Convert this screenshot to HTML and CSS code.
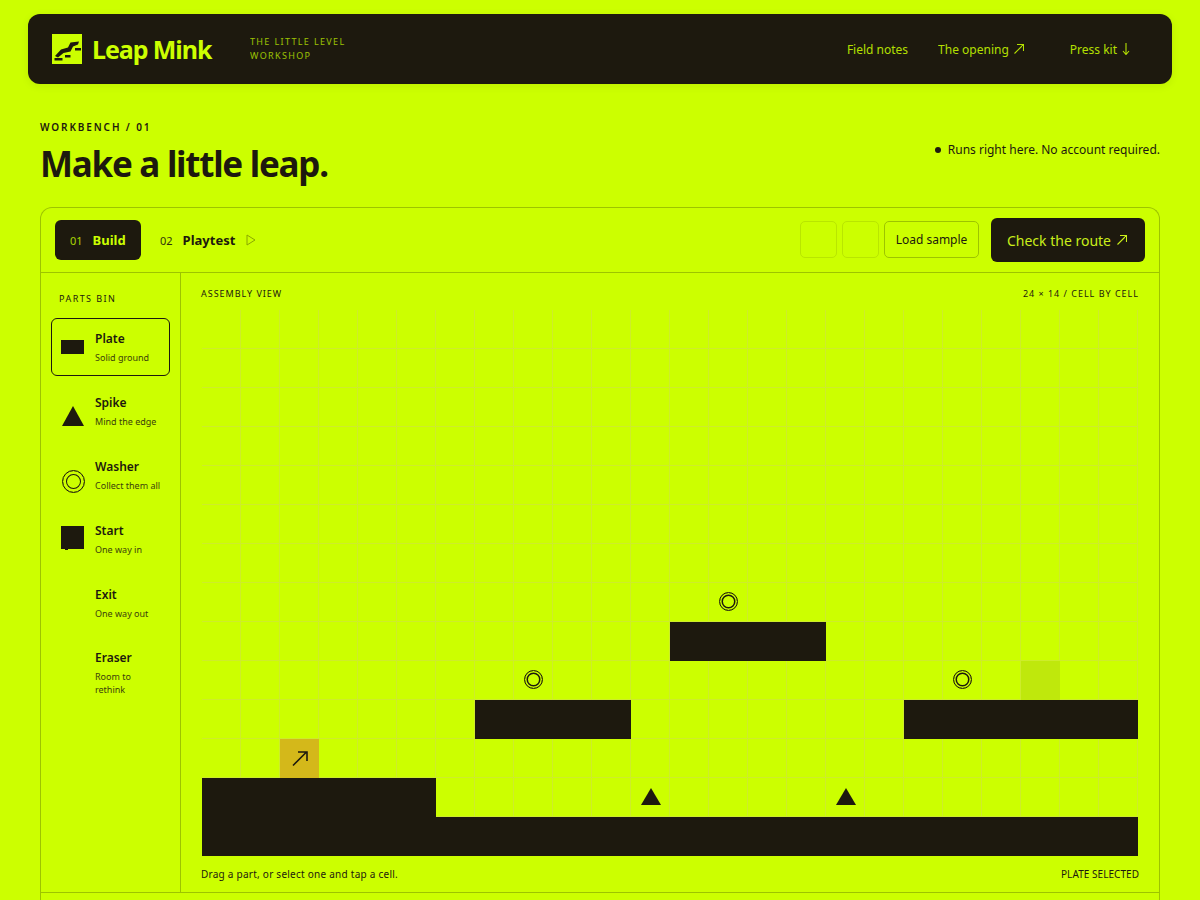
FILE: index.html
```html
<!DOCTYPE html>
<html lang="en">
  <head>
    <meta charset="UTF-8" />
    <meta name="viewport" content="width=device-width, initial-scale=1.0" />
    <title>Leap Mink - The little level workshop</title>
    <link rel="stylesheet" href="styles.css">
  </head>
  <body>
    <nav class="navbar">
      <a class="navbar_logo" href="#">
        <svg class="logo_mark" viewBox="0 0 30 30" width="30" height="30">
          <rect width="30" height="30" fill="#ccff00" />
          <path d="M3 22 L9 15.5 L16 13.5 L18.5 8.5 L27 7.5 L26 10.5 L21 12.5 L18.5 17.5 L11.5 19 L6 23.5 Z" fill="#1d190e" />
          <rect x="2.5" y="24" width="8" height="2.5" fill="#1d190e" />
          <rect x="13" y="21" width="5.5" height="2.5" fill="#1d190e" />
          <rect x="23" y="14" width="6" height="2.5" fill="#1d190e" />
        </svg>
        <span>Leap Mink</span>
      </a>
      <div class="navbar_tagline">THE LITTLE LEVEL<br />WORKSHOP</div>
      <ul class="navbar_menu">
        <li><a href="#">Field notes</a></li>
        <li>
          <a href="#">The opening
            <svg class="arrow" viewBox="0 0 10 10" width="10" height="10"><path d="M0.5 9.5 L9.5 0.5 M3 0.5 H9.5 V7" /></svg>
          </a>
        </li>
        <li class="press">
          <a href="#">Press kit
            <svg class="arrow" viewBox="0 0 8 12" width="8" height="12"><path d="M4 0 V11 M1 8 L4 11.5 L7 8" /></svg>
          </a>
        </li>
      </ul>
    </nav>

    <header class="intro">
      <div>
        <div class="eyebrow">WORKBENCH / 01</div>
        <h1>Make a little leap.</h1>
      </div>
      <p class="intro_note"><i class="dot"></i>Runs right here. No account required.</p>
    </header>

    <section class="bench">
      <div class="toolbar">
        <div class="tabs">
          <button class="tab active"><small>01</small>Build</button>
          <button class="tab"><small>02</small>Playtest<svg class="play" viewBox="0 0 10 12" width="10" height="12"><path d="M1 1 L9 6 L1 11 Z" /></svg></button>
        </div>
        <div class="actions">
          <button class="tool blank"></button>
          <button class="tool blank"></button>
          <button class="tool sample">Load sample</button>
          <button class="check">Check the route
            <svg class="arrow" viewBox="0 0 10 10" width="10" height="10"><path d="M0.5 9.5 L9.5 0.5 M3 0.5 H9.5 V7" /></svg>
          </button>
        </div>
      </div>

      <div class="bench_body">
        <aside class="parts">
          <div class="parts_title">PARTS BIN</div>
          <div class="part selected">
            <div class="part_icon"><i class="icon-plate"></i></div>
            <div><b>Plate</b><span>Solid ground</span></div>
          </div>
          <div class="part">
            <div class="part_icon"><i class="icon-spike"></i></div>
            <div><b>Spike</b><span>Mind the edge</span></div>
          </div>
          <div class="part">
            <div class="part_icon"><i class="icon-washer"></i></div>
            <div><b>Washer</b><span>Collect them all</span></div>
          </div>
          <div class="part">
            <div class="part_icon"><i class="icon-start"></i></div>
            <div><b>Start</b><span>One way in</span></div>
          </div>
          <div class="part">
            <div class="part_icon"></div>
            <div><b>Exit</b><span>One way out</span></div>
          </div>
          <div class="part eraser">
            <div class="part_icon"></div>
            <div><b>Eraser</b><span>Room to<br />rethink</span></div>
          </div>
        </aside>

        <div class="assembly">
          <div class="assembly_head">
            <span>ASSEMBLY VIEW</span>
            <span>24 × 14 / CELL BY CELL</span>
          </div>
          <div class="board">
            <div class="plate floor-left"></div>
            <div class="plate floor"></div>
            <div class="plate ledge-a"></div>
            <div class="plate ledge-b"></div>
            <div class="plate ledge-c"></div>
            <div class="spike spike-a"></div>
            <div class="spike spike-b"></div>
            <div class="washer washer-a"></div>
            <div class="washer washer-b"></div>
            <div class="washer washer-c"></div>
            <div class="start">
              <svg viewBox="0 0 18 18" width="18" height="18"><path d="M2 15.5 L15.5 2 M7 2 H16 V11" /></svg>
            </div>
            <div class="exit"></div>
          </div>
          <div class="assembly_foot">
            <span>Drag a part, or select one and tap a cell.</span>
            <span class="status">PLATE SELECTED</span>
          </div>
        </div>
      </div>

      <div class="bench_foot"></div>
    </section>
  </body>
</html>
```

FILE: styles.css
```css
* {
  box-sizing: border-box;
}

body {
  margin: 0;
  font-family: "Noto Sans", sans-serif;
  background: #ccff00;
  color: #1d190e;
}

button {
  font-family: inherit;
  cursor: pointer;
}

.navbar {
  display: flex;
  align-items: center;
  height: 70px;
  margin: 14px 28px 0;
  padding: 0 24px;
  background: #1d190e;
  color: #ccff00;
  border-radius: 12px;
  box-shadow: 0 2px 8px rgba(28, 24, 16, 0.08);
}

.navbar_logo {
  display: flex;
  align-items: center;
  gap: 10px;
  width: 198px;
  color: #ccff00;
  font-size: 25px;
  font-weight: 700;
  letter-spacing: -0.043em;
  text-decoration: none;
}

.logo_mark {
  display: block;
}

.navbar_tagline {
  font-size: 9px;
  line-height: 14px;
  letter-spacing: 0.15em;
  opacity: 0.72;
}

.navbar_menu {
  display: flex;
  list-style: none;
  gap: 30px;
  margin: 0 18px 0 auto;
  padding: 0;
  font-size: 12px;
}

.navbar_menu a {
  display: flex;
  align-items: center;
  gap: 5px;
  color: #ccff00;
  opacity: 0.86;
  text-decoration: none;
}

.navbar_menu .press {
  margin-left: 16px;
}

.arrow {
  display: block;
  fill: none;
  stroke: currentColor;
  stroke-width: 1.1;
}

.intro {
  display: flex;
  justify-content: space-between;
  align-items: flex-start;
  height: 123px;
  padding: 36px 40px 0;
}

.eyebrow {
  font-size: 10px;
  font-weight: 600;
  line-height: 14px;
  letter-spacing: 0.19em;
}

h1 {
  margin: 7px 0 0;
  font-size: 35px;
  font-weight: 700;
  line-height: 46px;
  letter-spacing: -0.036em;
}

.intro_note {
  display: flex;
  align-items: center;
  margin: 22px 0 0;
  font-size: 12px;
  line-height: 16px;
}

.dot {
  width: 6px;
  height: 6px;
  margin-right: 7px;
  border-radius: 50%;
  background: #1d190e;
}

.bench {
  margin: 0 40px;
  border: 1px solid #9dc400;
  border-bottom: none;
  border-radius: 12px 12px 0 0;
}

.toolbar {
  display: flex;
  justify-content: space-between;
  align-items: center;
  height: 65px;
  padding: 0 14px;
  border-bottom: 1px solid #9dc400;
}

.tabs,
.actions {
  display: flex;
  align-items: center;
}

.tab {
  display: flex;
  align-items: center;
  height: 40px;
  padding: 0 15px;
  border: none;
  border-radius: 6px;
  background: none;
  color: #1d190e;
  font-size: 13px;
  font-weight: 700;
}

.tab.active {
  width: 86px;
  margin-right: 4px;
  background: #1d190e;
  color: #ccff00;
}

.tab small {
  margin-right: 10px;
  font-size: 11px;
  font-weight: 400;
  opacity: 0.9;
}

.tab.active small {
  opacity: 0.8;
}

.play {
  margin-left: 11px;
  fill: none;
  stroke: #8aa800;
  stroke-width: 1;
}

.tool {
  height: 37px;
  margin: 0 5px 1px 0;
  padding: 0 11px;
  border: 1px solid #9dc400;
  border-radius: 5px;
  background: none;
  color: #1d190e;
  font-size: 12px;
}

.tool.blank {
  width: 37px;
  border-color: #b9e600;
}

.tool.sample {
  width: 95px;
  padding: 0;
}

.check {
  display: flex;
  align-items: center;
  justify-content: center;
  gap: 6px;
  width: 154px;
  height: 44px;
  margin-left: 7px;
  padding: 0 2px 0 0;
  border: none;
  border-radius: 6px;
  background: #1d190e;
  color: #c9ee1a;
  font-size: 14px;
}

.bench_body {
  display: flex;
}

.parts {
  flex: 0 0 140px;
  padding: 19px 10px 0;
  border-right: 1px solid #9dc400;
}

.parts_title {
  height: 26px;
  padding-left: 8px;
  font-size: 9px;
  line-height: 13px;
  letter-spacing: 0.16em;
}

.part {
  display: flex;
  align-items: center;
  margin-bottom: 6px;
  padding: 11px 0 11px 9px;
  border: 1px solid transparent;
  border-radius: 6px;
}

.part.selected {
  border-color: #1d190e;
}

.part.eraser {
  margin-top: -1px;
  align-items: flex-start;
}

.part_icon {
  display: flex;
  flex: 0 0 34px;
  align-items: center;
  justify-content: flex-start;
}

.part b {
  display: block;
  font-size: 12px;
  font-weight: 600;
  line-height: 17px;
}

.part span {
  display: block;
  margin-top: 4px;
  font-size: 9px;
  line-height: 13px;
  opacity: 0.85;
  white-space: nowrap;
}

.icon-plate {
  width: 23px;
  height: 14px;
  background: #1d190e;
}

.icon-spike {
  width: 0;
  height: 0;
  margin: 5px 0 -5px 1px;
  border-left: 11.5px solid transparent;
  border-right: 11.5px solid transparent;
  border-bottom: 20px solid #1d190e;
}

.icon-washer {
  width: 23px;
  height: 23px;
  margin: 6px 0 -6px 1px;
  border: 1px solid #1d190e;
  border-radius: 50%;
  background: #ccff00;
  box-shadow: inset 0 0 0 3px #ccff00, inset 0 0 0 4px #1d190e;
}

.icon-start {
  position: relative;
  width: 23px;
  height: 23px;
  margin: -2px 0 2px;
  background: #1d190e;
}

.icon-start::after {
  content: "";
  position: absolute;
  left: 4px;
  bottom: -1px;
  width: 3px;
  height: 1px;
  background: #1d190e;
}

.assembly {
  flex: 1;
  padding: 14px 20px 0;
}

.assembly_head {
  display: flex;
  justify-content: space-between;
  height: 23px;
  font-size: 9px;
  line-height: 13px;
  letter-spacing: 0.11em;
}

.board {
  display: grid;
  grid-template-columns: repeat(24, 39px);
  grid-template-rows: repeat(14, 39px);
  width: 936px;
  margin-left: 1px;
  background-image:
    linear-gradient(to right, transparent 38px, #cdec2c 38px),
    linear-gradient(to bottom, transparent 38px, #cdec2c 38px);
  background-size: 39px 39px;
}

.plate {
  background: #1d190e;
}

.floor-left {
  grid-area: 13 / 1 / 15 / 7;
}

.floor {
  grid-area: 14 / 7 / 15 / 25;
}

.ledge-a {
  grid-area: 11 / 8 / 12 / 12;
}

.ledge-b {
  grid-area: 9 / 13 / 10 / 17;
}

.ledge-c {
  grid-area: 11 / 19 / 12 / 25;
}

.spike {
  width: 0;
  height: 0;
  margin: 0 0 2px 1px;
  align-self: center;
  justify-self: center;
  border-left: 10px solid transparent;
  border-right: 10px solid transparent;
  border-bottom: 17px solid #1d190e;
}

.spike-a {
  grid-area: 13 / 12;
}

.spike-b {
  grid-area: 13 / 17;
}

.washer {
  width: 19px;
  height: 19px;
  margin: 0 1px 2px 0;
  align-self: center;
  justify-self: center;
  border: 1.5px solid #1d190e;
  border-radius: 50%;
  box-shadow: inset 0 0 0 1.5px #ccff00, inset 0 0 0 3px #1d190e;
}

.washer-a {
  grid-area: 8 / 14;
}

.washer-b {
  grid-area: 10 / 9;
}

.washer-c {
  grid-area: 10 / 20;
}

.start {
  display: flex;
  grid-area: 12 / 3;
  align-items: center;
  justify-content: center;
  background: #d4b81a;
}

.start svg {
  fill: none;
  stroke: #1d190e;
  stroke-width: 1.6;
}

.exit {
  grid-area: 10 / 22;
  background: #bfe80c;
}

.assembly_foot {
  display: flex;
  justify-content: space-between;
  align-items: center;
  height: 36px;
  font-size: 10px;
  letter-spacing: 0.025em;
}

.status {
  letter-spacing: 0.005em;
}

.bench_foot {
  height: 8px;
  border-top: 1px solid #9dc400;
}
```
